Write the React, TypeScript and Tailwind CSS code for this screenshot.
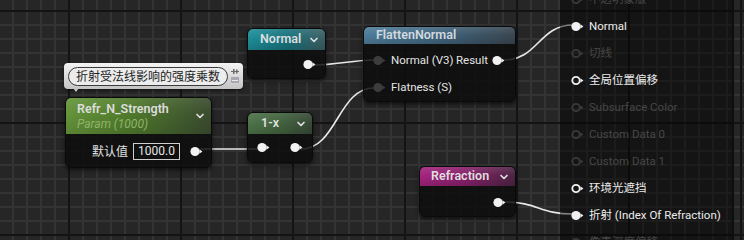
import { ChevronDown } from "lucide-react";

type PinKind = "filled" | "ring";

function Pin({ kind = "filled", color = "#f2f2f2" }: { kind?: PinKind; color?: string }) {
  return (
    <svg width="13" height="11" viewBox="0 0 13 11" className="shrink-0">
      {kind === "filled" ? (
        <circle cx="5" cy="5.5" r="4.6" fill={color} />
      ) : (
        <circle cx="5" cy="5.5" r="3.7" fill="none" stroke={color} strokeWidth="1.8" />
      )}
      <path d="M9.4 3.2 L12.4 5.5 L9.4 7.8 Z" fill={color} />
    </svg>
  );
}

function Chevron() {
  return <ChevronDown size={12} strokeWidth={3.4} className="text-[#dedede] shrink-0" />;
}

const panelRows: { label: string; active: boolean; pin: PinKind }[] = [
  { label: "不透明蒙版", active: false, pin: "ring" },
  { label: "Normal", active: true, pin: "filled" },
  { label: "切线", active: false, pin: "ring" },
  { label: "全局位置偏移", active: true, pin: "ring" },
  { label: "Subsurface Color", active: false, pin: "ring" },
  { label: "Custom Data 0", active: false, pin: "ring" },
  { label: "Custom Data 1", active: false, pin: "ring" },
  { label: "环境光遮挡", active: true, pin: "ring" },
  { label: "折射 (Index Of Refraction)", active: true, pin: "filled" },
  { label: "像素深度偏移", active: false, pin: "ring" },
];

// bezier wire with horizontal tangents, like the material graph draws them
function wire(x1: number, y1: number, x2: number, y2: number, d: number) {
  return `M${x1} ${y1} C${x1 + d} ${y1} ${x2 - d} ${y2} ${x2} ${y2}`;
}

export default function App() {
  return (
    <div className="relative w-[744px] h-[240px] overflow-hidden bg-[#262626] font-[Roboto,'Noto_Sans_CJK_SC',sans-serif]">
      {/* Grid + wires */}
      <svg className="absolute inset-0" width="744" height="240">
        <defs>
          <pattern id="minor" x="12" y="10" width="14" height="14" patternUnits="userSpaceOnUse">
            <rect x="0" y="0" width="2" height="14" fill="#333333" />
            <rect x="0" y="0" width="14" height="2" fill="#333333" />
          </pattern>
          <pattern id="major" x="68" y="10" width="112" height="112" patternUnits="userSpaceOnUse">
            <rect x="0" y="0" width="2" height="112" fill="#141414" />
            <rect x="0" y="0" width="112" height="2" fill="#141414" />
          </pattern>
        </defs>
        <rect width="744" height="240" fill="url(#minor)" />
        <rect width="744" height="240" fill="url(#major)" />
        <g fill="none" stroke="#e8e8e8" strokeWidth="1.6" strokeLinecap="round">
          <path d={wire(315, 65, 374, 60, 20)} />
          <path d={wire(301, 149, 374, 88, 36)} />
          <path d={wire(201, 149, 258, 149, 10)} />
          <path d={wire(504, 60, 573, 25, 34)} />
          <path d={wire(504, 202, 573, 214, 34)} />
        </g>
      </svg>

      {/* Comment bubble */}
      <div className="absolute left-[64px] top-[63px] w-[179px] h-[26px] rounded-[4px] bg-[linear-gradient(180deg,#f4f4f4_0%,#d6d6d6_60%,#c4c4c4_100%)] shadow-[0_1px_3px_rgba(0,0,0,0.6)] flex items-center pl-[4px] pr-[3px]">
        <div className="h-[19px] w-[160px] rounded-full border border-[#3a3a3a] bg-[#ececec] flex items-center pl-[7px] text-[12px] leading-none text-[#1c1c1c] font-['Noto_Sans_CJK_SC',sans-serif]">
          折射受法线影响的强度乘数
        </div>
        <div className="ml-auto flex flex-col items-center gap-[3px] pr-[1px]">
          <svg width="8" height="5" viewBox="0 0 8 5">
            <rect x="0" y="2" width="8" height="1" fill="#6a6a6a" />
            <rect x="2" y="0" width="1.5" height="5" fill="#6a6a6a" />
            <rect x="5" y="0.5" width="1.5" height="4" fill="#6a6a6a" />
          </svg>
          <svg width="8" height="6" viewBox="0 0 8 6">
            <rect x="0" y="0" width="8" height="6" fill="#a8a8b0" />
            <rect x="1" y="3" width="6" height="1" fill="#e8e8ee" />
          </svg>
        </div>
        <div className="absolute left-[9px] top-[25px] w-0 h-0 border-l-[3px] border-r-[3px] border-t-[4px] border-l-transparent border-r-transparent border-t-[#c4c4c4]" />
      </div>

      {/* Refr_N_Strength */}
      <div className="absolute left-[65px] top-[97px] w-[147px] h-[71px] rounded-[6px] border border-[#0a0a0a] bg-[#0d0d0d]/85 shadow-[0_2px_4px_rgba(0,0,0,0.6)] overflow-hidden flex flex-col">
        <div className="relative h-[36px] bg-[linear-gradient(90deg,#66953a_0%,#4f7a2c_45%,#3b4c30_100%)] flex items-start pl-[11px] pr-[5px] pt-[3px]">
          <div className="absolute inset-0 bg-[linear-gradient(180deg,rgba(255,255,255,0.08)_0%,rgba(0,0,0,0)_40%,rgba(0,0,0,0.12)_100%)]" />
          <div className="relative flex flex-col">
            <span className="text-[12.5px] leading-[16px] font-semibold text-[#dcdcdc]">Refr_N_Strength</span>
            <span className="text-[12px] leading-[15px] italic text-[#8fb46a]">Param (1000)</span>
          </div>
          <div className="relative ml-auto mt-[9px]">
            <Chevron />
          </div>
        </div>
        <div className="flex-1 flex items-center pl-[26px] pr-[8px] pt-[1px]">
          <span className="text-[12px] text-[#e0e0e0] font-['Noto_Sans_CJK_SC',sans-serif]">默认值</span>
          <div className="ml-[5px] h-[17px] w-[47px] border border-[#cfcfcf] flex items-center pl-[4px] text-[12px] text-[#e6e6e6]">
            1000.0
          </div>
          <div className="ml-auto">
            <Pin />
          </div>
        </div>
      </div>

      {/* Normal */}
      <div className="absolute left-[247px] top-[28px] w-[79px] h-[51px] rounded-[6px] border border-[#0a0a0a] bg-[#0d0d0d]/85 shadow-[0_2px_4px_rgba(0,0,0,0.6)] overflow-hidden flex flex-col">
        <div className="relative h-[21px] bg-[linear-gradient(90deg,#1e8e9a_0%,#17737d_50%,#3c5e62_100%)] flex items-center pl-[12px] pr-[5px]">
          <div className="absolute inset-0 bg-[linear-gradient(180deg,rgba(255,255,255,0.1)_0%,rgba(0,0,0,0)_45%,rgba(0,0,0,0.15)_100%)]" />
          <span className="relative text-[12.5px] font-semibold text-[#dedede]">Normal</span>
          <div className="relative ml-auto">
            <Chevron />
          </div>
        </div>
        <div className="flex-1 flex items-center justify-end pr-[9px] pt-[1px]">
          <Pin />
        </div>
      </div>

      {/* 1-x */}
      <div className="absolute left-[247px] top-[112px] w-[66px] h-[51px] rounded-[6px] border border-[#0a0a0a] bg-[#0d0d0d]/85 shadow-[0_2px_4px_rgba(0,0,0,0.6)] overflow-hidden flex flex-col">
        <div className="relative h-[21px] bg-[linear-gradient(90deg,#4f744a_0%,#43643f_50%,#384a38_100%)] flex items-center pl-[13px] pr-[5px]">
          <div className="absolute inset-0 bg-[linear-gradient(180deg,rgba(255,255,255,0.08)_0%,rgba(0,0,0,0)_45%,rgba(0,0,0,0.15)_100%)]" />
          <span className="relative text-[12.5px] font-semibold text-[#dedede]">1-x</span>
          <div className="relative ml-auto">
            <Chevron />
          </div>
        </div>
        <div className="flex-1 flex items-center justify-between pl-[9px] pr-[9px] pb-[1px]">
          <Pin />
          <Pin />
        </div>
      </div>

      {/* FlattenNormal */}
      <div className="absolute left-[363px] top-[26px] w-[153px] h-[76px] rounded-[6px] border border-[#0a0a0a] bg-[#0d0d0d]/85 shadow-[0_2px_4px_rgba(0,0,0,0.6)] overflow-hidden flex flex-col">
        <div className="relative h-[17px] bg-[linear-gradient(90deg,#4f7d9a_0%,#40657e_50%,#3a4650_100%)] flex items-center pl-[12px]">
          <div className="absolute inset-0 bg-[linear-gradient(180deg,rgba(255,255,255,0.1)_0%,rgba(0,0,0,0)_45%,rgba(0,0,0,0.15)_100%)]" />
          <span className="relative text-[12.5px] font-semibold text-[#d2d8de]">FlattenNormal</span>
        </div>
        <div className="flex flex-col pt-[3px] text-[11.5px] text-[#e4e4e4]">
          <div className="h-[27px] flex items-center pl-[9px] pr-[10px]">
            <Pin color="#3c3c3c" />
            <span className="ml-[5px]">Normal (V3)</span>
            <span className="ml-auto mr-[4px]">Result</span>
            <Pin />
          </div>
          <div className="h-[27px] flex items-center pl-[9px]">
            <Pin color="#3c3c3c" />
            <span className="ml-[5px]">Flatness (S)</span>
          </div>
        </div>
      </div>

      {/* Refraction */}
      <div className="absolute left-[419px] top-[166px] w-[97px] h-[51px] rounded-[6px] border border-[#0a0a0a] bg-[#0d0d0d]/85 shadow-[0_2px_4px_rgba(0,0,0,0.6)] overflow-hidden flex flex-col">
        <div className="relative h-[19px] bg-[linear-gradient(90deg,#a5247f_0%,#86206a_50%,#4c2442_100%)] flex items-center pl-[11px] pr-[5px]">
          <div className="absolute inset-0 bg-[linear-gradient(180deg,rgba(255,255,255,0.1)_0%,rgba(0,0,0,0)_45%,rgba(0,0,0,0.15)_100%)]" />
          <span className="relative text-[12.5px] font-semibold text-[#dedede]">Refraction</span>
          <div className="relative ml-auto">
            <Chevron />
          </div>
        </div>
        <div className="flex-1 flex items-center justify-end pr-[9px] pt-[3px]">
          <Pin />
        </div>
      </div>

      {/* Material output pins panel */}
      <div className="absolute left-[560px] top-0 w-[174px] h-[240px] bg-black/45 border-r-2 border-[#0e0e0e]">
        <div className="flex flex-col -mt-[14px]">
          {panelRows.map((row) => (
            <div key={row.label} className="h-[27px] flex items-center pl-[11px] gap-[5px] text-[11.5px]">
              <Pin kind={row.pin} color={row.active ? "#f0f0f0" : "#3a3a3a"} />
              <span className={row.active ? "text-[#ececec]" : "text-[#474747]"}>{row.label}</span>
            </div>
          ))}
        </div>
      </div>
    </div>
  );
}
